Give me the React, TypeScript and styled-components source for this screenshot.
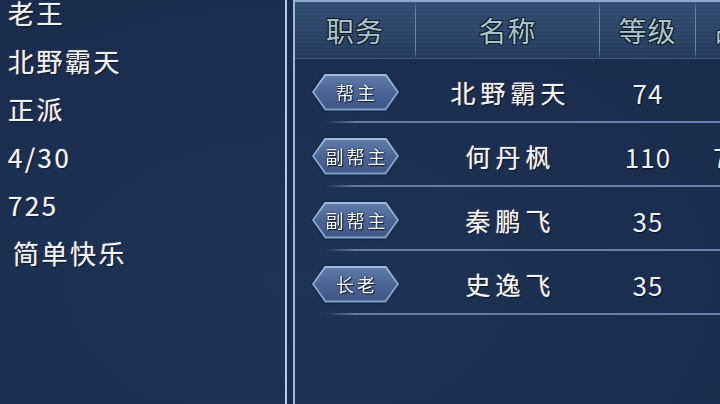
import styled, { createGlobalStyle } from "styled-components";

interface Member {
  rank: string;
  name: string;
  level: string;
  power: string;
}

const members: Member[] = [
  { rank: "帮主", name: "北野霸天", level: "74", power: "980" },
  { rank: "副帮主", name: "何丹枫", level: "110", power: "7215" },
  { rank: "副帮主", name: "秦鹏飞", level: "35", power: "960" },
  { rank: "长老", name: "史逸飞", level: "35", power: "940" },
];

const profile = ["老王", "北野霸天", "正派", "4/30", "725", "简单快乐"];

export default function App() {
  return (
    <>
      <GlobalStyle />
      <Screen>
        <InfoColumn>
          <InfoList>
            {profile.map((line, index) => (
              <InfoLine key={index} indent={index === 5 ? 5 : 0}>
                {line}
              </InfoLine>
            ))}
          </InfoList>
        </InfoColumn>

        <Rail />

        <RosterPanel>
          <HeaderRow>
            <HeaderCell divider>职务</HeaderCell>
            <HeaderCell divider>名称</HeaderCell>
            <HeaderCell divider>等级</HeaderCell>
            <HeaderCell>战力</HeaderCell>
          </HeaderRow>

          {members.map((member, index) => (
            <MemberRow key={index}>
              <Cell>
                <BadgeShadow>
                  <Badge>
                    <BadgeFace>{member.rank}</BadgeFace>
                  </Badge>
                </BadgeShadow>
              </Cell>
              <NameCell>{member.name}</NameCell>
              <NumberCell>{member.level}</NumberCell>
              <NumberCell>{member.power}</NumberCell>
            </MemberRow>
          ))}
        </RosterPanel>
      </Screen>
    </>
  );
}

const GlobalStyle = createGlobalStyle`
  html, body {
    margin: 0;
    padding: 0;
    width: 720px;
    height: 404px;
    overflow: hidden;
    background: #1b2e4f;
  }
  body {
    font-family: "Noto Sans CJK SC", "Noto Sans", sans-serif;
  }
`;

const Screen = styled.div`
  display: flex;
  width: 720px;
  height: 404px;
  overflow: hidden;
  background: radial-gradient(ellipse at 40% 70%, #1e3456 0%, #1b2e4f 60%, #1a2c4c 100%);
`;

const InfoColumn = styled.div`
  width: 277px;
  flex-shrink: 0;
  padding-left: 8px;
  overflow: hidden;
`;

const InfoList = styled.div`
  display: flex;
  flex-direction: column;
  margin-top: -11px;
`;

const InfoLine = styled.div<{ indent: number }>`
  height: 48px;
  line-height: 48px;
  padding-left: ${(p) => p.indent}px;
  font-size: 26px;
  letter-spacing: 2.5px;
  color: #f2f3f5;
  text-shadow: 1px 1px 1px #0b1628, 0 0 1px #f2f3f5;
  white-space: nowrap;
`;

const Rail = styled.div`
  width: 6px;
  flex-shrink: 0;
  border-left: 2px solid #b7cbe6;
  border-right: 2px solid #9fb7d7;
  background: #1a2c4b;
`;

const RosterPanel = styled.div`
  flex: 1;
  min-width: 0;
  overflow: hidden;
  border-top: 2px solid #8ea9cb;
`;

const columns = "121px 184px 96px 96px";

const HeaderRow = styled.div`
  display: grid;
  grid-template-columns: ${columns};
  height: 56px;
  border-bottom: 1px solid #3f5a7f;
  background:
    repeating-linear-gradient(180deg, rgba(255, 255, 255, 0.04) 0 1px, transparent 1px 4px),
    linear-gradient(180deg, #324d72 0%, #2b4467 55%, #233a5c 100%);
`;

const HeaderCell = styled.div<{ divider?: boolean }>`
  display: flex;
  align-items: center;
  justify-content: center;
  font-size: 28px;
  letter-spacing: 1px;
  color: #aac4c6;
  text-shadow:
    1px 1px 0 #0e1b2b,
    -1px -1px 0 #0e1b2b,
    1px -1px 0 #0e1b2b,
    -1px 1px 0 #0e1b2b;
  white-space: nowrap;
  border-right: ${(p) => (p.divider ? "1px solid" : "none")};
  border-image: linear-gradient(180deg, transparent 0%, #6b85a6 15%, #6b85a6 85%, transparent 100%) 1;
`;

const MemberRow = styled.div`
  display: grid;
  grid-template-columns: ${columns};
  height: 60px;
  padding-top: 4px;
  align-items: center;
  background:
    linear-gradient(90deg, transparent 0, transparent 30px, #5f7ba6 60px, #6682ad 100%)
    bottom / 100% 2px no-repeat;
`;

const Cell = styled.div`
  display: flex;
  align-items: center;
  justify-content: center;
  margin-bottom: 2px;
`;

const NameCell = styled(Cell)`
  font-size: 25px;
  letter-spacing: 5px;
  padding-left: 5px;
  color: #f5f5f7;
  text-shadow: 1px 1px 1px #081222, 0 0 1px #f5f5f7;
  white-space: nowrap;
`;

const NumberCell = styled(Cell)`
  font-size: 26px;
  letter-spacing: 1px;
  color: #eef0f3;
  text-shadow: 1px 1px 1px #081222;
  white-space: nowrap;
`;

const BadgeShadow = styled.div`
  filter: drop-shadow(0 0 1px #0a1424);
`;

const Badge = styled.div`
  display: flex;
  width: 87px;
  height: 37px;
  padding: 2px;
  box-sizing: border-box;
  background: linear-gradient(180deg, #9bbce3, #7d9fca);
  clip-path: polygon(0 50%, 13px 0, calc(100% - 13px) 0, 100% 50%, calc(100% - 13px) 100%, 13px 100%);
`;

const BadgeFace = styled.div`
  flex: 1;
  display: flex;
  align-items: center;
  justify-content: center;
  font-size: 18px;
  letter-spacing: 3px;
  padding-left: 3px;
  color: #f4f6fa;
  text-shadow: 1px 1px 1px #101c30, 0 0 2px #101c30;
  background: linear-gradient(180deg, #5f79a8 0%, #4a6394 55%, #3f5686 100%);
  clip-path: polygon(0 50%, 12px 0, calc(100% - 12px) 0, 100% 50%, calc(100% - 12px) 100%, 12px 100%);
`;
